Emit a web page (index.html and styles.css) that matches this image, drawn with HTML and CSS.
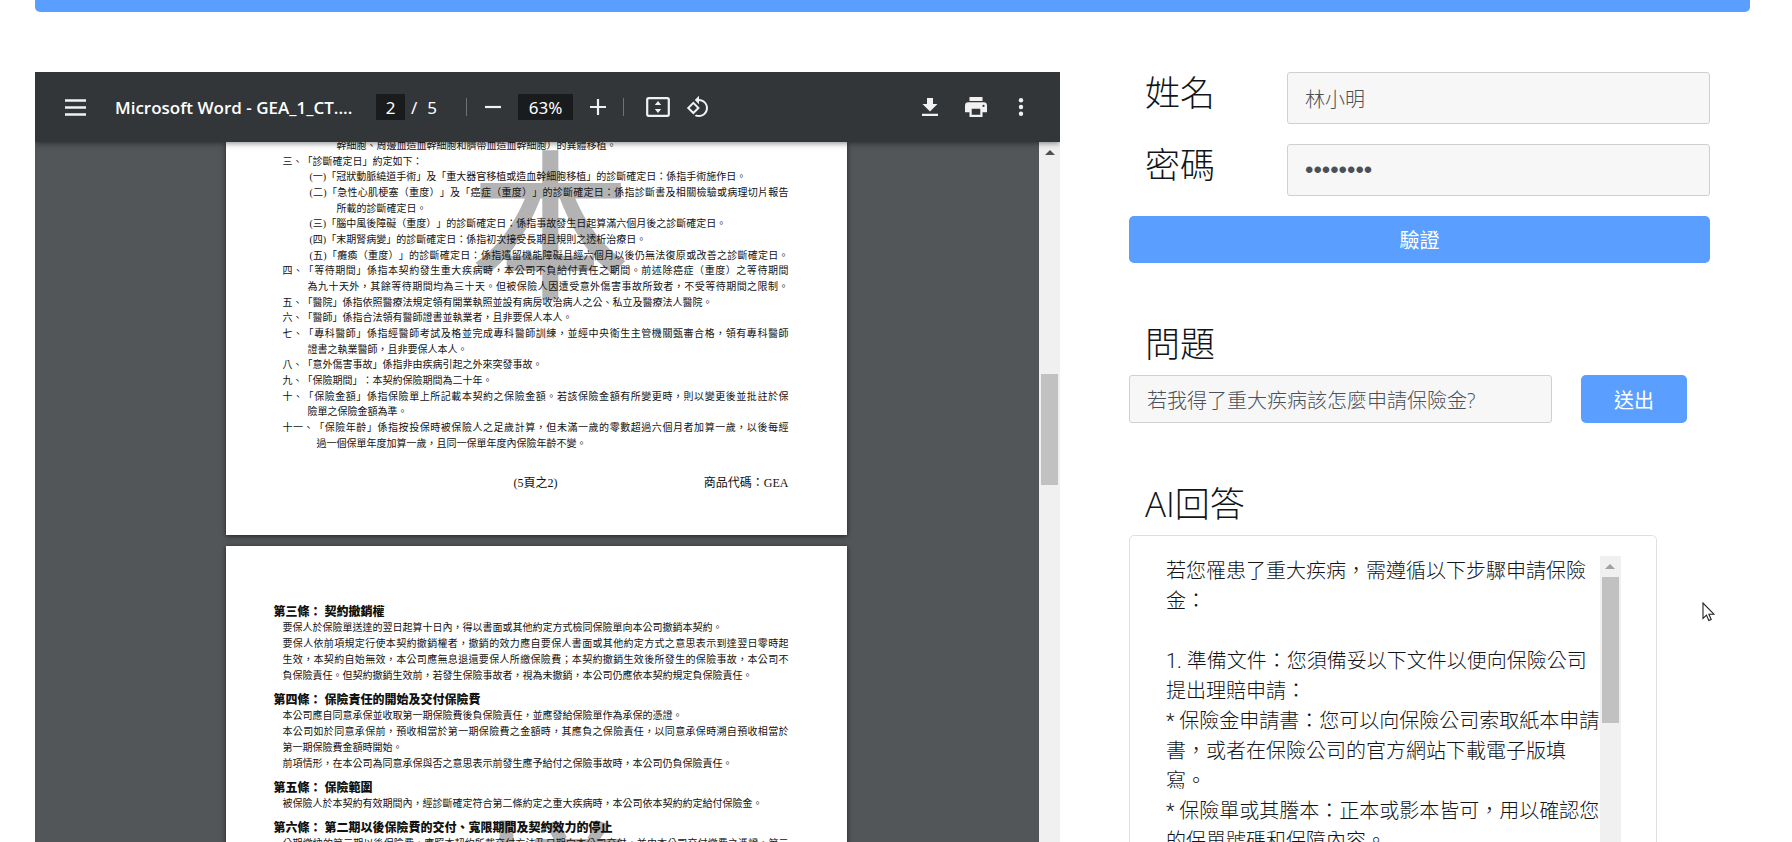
FILE: index.html
```html
<!DOCTYPE html>
<html lang="zh-Hant">
<head>
<meta charset="utf-8">
<title>保險問答</title>
<link rel="stylesheet" href="styles.css">
</head>
<body>
<div class="banner"></div>
<main class="columns">
  <section class="viewer" aria-label="PDF">
    <div class="toolbar">
      <button class="tool tool-menu" aria-label="選單"><svg width="21" height="17" viewBox="0 0 21 17"><path d="M0 1.5h21M0 8.5h21M0 15.500h21" stroke="#f1f1f1" stroke-width="2.600"/></svg></button>
      <span class="doc-title">Microsoft Word - GEA_1_CT....</span>
      <input class="page-no" type="text" value="2" aria-label="頁碼">
      <span class="page-total"><span>/</span><span>5</span></span>
      <span class="divider"></span>
      <button class="tool" aria-label="縮小"><svg width="16" height="16" viewBox="0 0 16 16"><path d="M0 8h16" stroke="#f1f1f1" stroke-width="2.200"/></svg></button>
      <input class="zoom-level" type="text" value="63%" aria-label="縮放">
      <button class="tool" aria-label="放大"><svg width="16" height="16" viewBox="0 0 16 16"><path d="M0 8h16M8 0v16" stroke="#f1f1f1" stroke-width="2.200"/></svg></button>
      <span class="divider"></span>
      <button class="tool tool-fit" aria-label="符合頁面"><svg width="24" height="20" viewBox="0 0 24 20"><rect x="1.200" y="1.200" width="21.600" height="17.600" rx="1.500" fill="none" stroke="#f1f1f1" stroke-width="2.200"/><path d="M12 4l3.200 4H8.800zM12 16l3.200-4H8.800z" fill="#f1f1f1"/></svg></button>
      <button class="tool tool-rotate" aria-label="旋轉"><svg width="24" height="24" viewBox="0 0 24 24"><path fill="#f1f1f1" d="M7.340 6.410L.86 12.900l6.490 6.480 6.490-6.480-6.500-6.490zM3.690 12.900l3.660-3.660L11 12.900l-3.660 3.660-3.650-3.660zm15.670-6.260C17.610 4.880 15.300 4 13 4V.76L8.760 5 13 9.240V6c1.790 0 3.580.68 4.950 2.050 2.730 2.730 2.730 7.170 0 9.900C16.580 19.320 14.790 20 13 20c-.97 0-1.940-.21-2.840-.61l-1.490 1.490C10.020 21.620 11.510 22 13 22c2.300 0 4.610-.88 6.360-2.640 3.520-3.510 3.520-9.210 0-12.720z"/></svg></button>
      <span class="spacer"></span>
      <button class="tool" aria-label="下載"><svg width="16" height="18" viewBox="0 0 16 18"><path fill="#f1f1f1" d="M5 0h6v6h4.500L8 13.500.5 6H5zM0 15.800h16V18H0z"/></svg></button>
      <button class="tool tool-print" aria-label="列印"><svg width="22" height="20" viewBox="0 0 22 20"><path fill="#f1f1f1" fill-rule="evenodd" d="M4.500 0h13v4h-13zM3.500 5.300h15A3.400 3.400 0 0 1 22 8.700v6.600h-4.500V20h-13v-4.700H0V8.700a3.400 3.400 0 0 1 3.500-3.400zM6.700 11.800v6h8.600v-6zM18.500 7.800a1.100 1.100 0 1 0 .01 2.200 1.100 1.100 0 0 0-.01-2.200z"/></svg></button>
      <button class="tool tool-more" aria-label="更多"><svg width="6" height="18" viewBox="0 0 6 18"><g fill="#f1f1f1"><circle cx="3" cy="2.300" r="2.200"/><circle cx="3" cy="9" r="2.200"/><circle cx="3" cy="15.700" r="2.200"/></g></svg></button>
    </div>
    <div class="stage">
      <div class="pages">
        <article class="sheet sheet-two">
          <span class="mark mark-two">本</span>
          <div class="clauses">
            <p class="in-deep">幹細胞、周邊血造血幹細胞和臍帶血造血幹細胞）的異體移植。</p>
            <p>三、「診斷確定日」約定如下：</p>
            <p class="in-item">(一)「冠狀動脈繞道手術」及「重大器官移植或造血幹細胞移植」的診斷確定日：係指手術施作日。</p>
            <p class="in-item full">(二)「急性心肌梗塞（重度）」及「癌症（重度）」的診斷確定日：係指診斷書及相關檢驗或病理切片報告</p>
            <p class="in-deep">所載的診斷確定日。</p>
            <p class="in-item">(三)「腦中風後障礙（重度）」的診斷確定日：係指事故發生日起算滿六個月後之診斷確定日。</p>
            <p class="in-item">(四)「末期腎病變」的診斷確定日：係指初次接受長期且規則之透析治療日。</p>
            <p class="in-item full">(五)「癱瘓（重度）」的診斷確定日：係指遺留機能障礙且經六個月以後仍無法復原或改善之診斷確定日。</p>
            <p class="full">四、「等待期間」係指本契約發生重大疾病時，本公司不負給付責任之期間。前述除癌症（重度）之等待期間</p>
            <p class="in-text full">為九十天外，其餘等待期間均為三十天。但被保險人因遭受意外傷害事故所致者，不受等待期間之限制。</p>
            <p>五、「醫院」係指依照醫療法規定領有開業執照並設有病房收治病人之公、私立及醫療法人醫院。</p>
            <p>六、「醫師」係指合法領有醫師證書並執業者，且非要保人本人。</p>
            <p class="full">七、「專科醫師」係指經醫師考試及格並完成專科醫師訓練，並經中央衛生主管機關甄審合格，領有專科醫師</p>
            <p class="in-text">證書之執業醫師，且非要保人本人。</p>
            <p>八、「意外傷害事故」係指非由疾病引起之外來突發事故。</p>
            <p>九、「保險期間」：本契約保險期間為二十年。</p>
            <p class="full">十、「保險金額」係指保險單上所記載本契約之保險金額。若該保險金額有所變更時，則以變更後並批註於保</p>
            <p class="in-text">險單之保險金額為準。</p>
            <p class="full">十一、「保險年齡」係指按投保時被保險人之足歲計算，但未滿一歲的零數超過六個月者加算一歲，以後每經</p>
            <p class="in-wide">過一個保單年度加算一歲，且同一保單年度內保險年齡不變。</p>
          </div>
          <footer class="sheet-foot"><span></span><span>(5頁之2)</span><span class="code">商品代碼：GEA</span></footer>
        </article>
        <article class="sheet sheet-three">
          <span class="mark mark-three">樣</span>
          <h3>第三條： 契約撤銷權</h3>
          <p>要保人於保險單送達的翌日起算十日內，得以書面或其他約定方式檢同保險單向本公司撤銷本契約。</p>
          <p class="full">要保人依前項規定行使本契約撤銷權者，撤銷的效力應自要保人書面或其他約定方式之意思表示到達翌日零時起</p>
          <p class="full">生效，本契約自始無效，本公司應無息退還要保人所繳保險費；本契約撤銷生效後所發生的保險事故，本公司不</p>
          <p>負保險責任。但契約撤銷生效前，若發生保險事故者，視為未撤銷，本公司仍應依本契約規定負保險責任。</p>
          <h3>第四條： 保險責任的開始及交付保險費</h3>
          <p>本公司應自同意承保並收取第一期保險費後負保險責任，並應發給保險單作為承保的憑證。</p>
          <p class="full">本公司如於同意承保前，預收相當於第一期保險費之金額時，其應負之保險責任，以同意承保時溯自預收相當於</p>
          <p>第一期保險費金額時開始。</p>
          <p>前項情形，在本公司為同意承保與否之意思表示前發生應予給付之保險事故時，本公司仍負保險責任。</p>
          <h3>第五條： 保險範圍</h3>
          <p>被保險人於本契約有效期間內，經診斷確定符合第二條約定之重大疾病時，本公司依本契約約定給付保險金。</p>
          <h3>第六條： 第二期以後保險費的交付、寬限期間及契約效力的停止</h3>
          <p class="full">分期繳納的第二期以後保險費，應照本契約所載交付方法及日期向本公司交付，並由本公司交付繳費之憑證。第二</p>
        </article>
      </div>
      <div class="bar" aria-hidden="true"><span class="bar-arrow"></span><span class="bar-thumb bar-thumb-doc"></span></div>
    </div>
  </section>

  <section class="panel">
    <form class="login">
      <label class="heading" for="name">姓名</label>
      <input class="field" id="name" type="text" value="林小明">
      <label class="heading" for="pass">密碼</label>
      <input class="field secret" id="pass" type="password" value="12345678">
      <button class="primary verify" type="button">驗證</button>
    </form>
    <form class="ask">
      <label class="heading" for="question">問題</label>
      <div class="ask-row">
        <input class="field" id="question" type="text" value="若我得了重大疾病該怎麼申請保險金?">
        <button class="primary send" type="button">送出</button>
      </div>
    </form>
    <h2 class="heading">AI回答</h2>
    <div class="card">
      <div class="answer">若您罹患了重大疾病，需遵循以下步驟申請保險
金：

1. 準備文件：您須備妥以下文件以便向保險公司
提出理賠申請：
* 保險金申請書：您可以向保險公司索取紙本申請
書，或者在保險公司的官方網站下載電子版填
寫。
* 保險單或其謄本：正本或影本皆可，用以確認您
的保單號碼和保障內容。</div>
      <div class="bar" aria-hidden="true"><span class="bar-arrow bar-arrow-dim"></span><span class="bar-thumb bar-thumb-answer"></span></div>
    </div>
  </section>
</main>
<svg class="pointer" width="13" height="20" viewBox="0 0 13 20" aria-hidden="true"><path d="M1 1v15.500l3.500-3.400 2.300 5.400 2.400-1-2.300-5.300h5z" fill="#fff" stroke="#222" stroke-width="1.100"/></svg>
</body>
</html>
```

FILE: styles.css
```css
* { box-sizing: border-box; }
body {
  margin: 0;
  padding: 0 42px 0 35px;
  height: 100vh;
  overflow: hidden;
  display: flex;
  flex-direction: column;
  background: #fff;
  color: #111418;
  font-family: "Open Sans", "Noto Sans CJK TC", sans-serif;
  font-size: 20px;
  font-weight: 300;
}
p, h2, h3 { margin: 0; }
button, input { font: inherit; }
button { border: 0; padding: 0; }

.banner { flex: none; height: 12px; background: #5a9fff; border-radius: 0 0 5px 5px; }
.columns {
  flex: 1;
  min-height: 0;
  margin-top: 60px;
  display: grid;
  grid-template-columns: 1025fr 621fr;
  grid-template-rows: 100%;
  gap: 69px;
}

.viewer { display: flex; flex-direction: column; min-width: 0; overflow: hidden; background: #525659; }
.toolbar {
  flex: none;
  height: 70px;
  padding: 0 36px 0 30px;
  display: flex;
  align-items: center;
  background: #323639;
  color: #fff;
  font-family: "Noto Sans", sans-serif;
  font-size: 17px;
  font-weight: 400;
  box-shadow: 0 1px 6px rgba(0, 0, 0, .5);
  z-index: 1;
}
.tool { display: flex; background: none; }
.tool-menu { margin-right: 29px; }
.doc-title { width: 261px; font-family: "Open Sans", sans-serif; font-weight: 600; white-space: nowrap; }
.page-no, .zoom-level {
  height: 26px;
  border: 0;
  padding: 0;
  background: #191b1c;
  color: #fff;
  text-align: center;
}
.page-no { width: 29px; }
.zoom-level { width: 55px; margin: 0 17px; }
.page-total { width: 61px; padding-left: 6px; display: flex; gap: 10px; }
.divider { width: 1px; height: 18px; margin-right: 18px; background: #6f7274; }
.zoom-level + .tool { margin-right: 17px; }
.tool-fit { margin: 0 16px 0 4px; }
.spacer { flex: 1; }
.tool-print { margin: 0 31px 0 27px; }

.stage { flex: 1; min-height: 0; display: flex; overflow: hidden; }
.pages { flex: 1; display: flex; flex-direction: column; align-items: center; gap: 11px; padding-right: 2px; }
.sheet {
  position: relative;
  flex: none;
  width: 621px;
  background: #fff;
  color: #111;
  box-shadow: 0 1px 5px rgba(0, 0, 0, .6);
  font-family: "Liberation Serif", "Noto Sans CJK TC", serif;
  font-size: 10px;
  font-weight: 400;
  line-height: 16px;
  white-space: nowrap;
  text-spacing-trim: space-all;
  overflow: hidden;
}
.sheet-two {
  height: 393px;
  padding: 0 58px 44px 57px;
  display: flex;
  flex-direction: column;
  justify-content: flex-end;
}
.clauses {
  position: relative;
  flex: none;
  height: 313px;
  display: flex;
  flex-direction: column;
  justify-content: space-between;
}
.clauses p { height: 15px; }
.full { text-align-last: justify; }
.in-item { padding-left: 27px; }
.in-deep { padding-left: 54px; }
.in-text { padding-left: 25px; }
.in-wide { padding-left: 34px; }
.sheet-foot {
  position: relative;
  margin-top: 24px;
  display: grid;
  grid-template-columns: 1fr auto 1fr;
  font-size: 12px;
}
.code { text-align: right; }
.sheet-three { height: 878px; padding: 58px 58px 0 48px; }
.sheet-three h3 { position: relative; font-size: 12px; font-weight: 900; }
.sheet-three p { position: relative; padding-left: 9px; }
.sheet-three p + h3 { margin-top: 8px; }
.mark {
  position: absolute;
  color: #b3b3b3;
  font-size: 160px;
  font-weight: 500;
  line-height: 160px;
}
.mark-two { left: 245px; top: 10px; }
.mark-three { left: 245px; top: 276px; }

.bar {
  flex: none;
  width: 21px;
  display: flex;
  flex-direction: column;
  align-items: center;
  background: #f0f0f0;
}
.bar-arrow {
  margin-top: 8px;
  border: 5px solid transparent;
  border-top: 0;
  border-bottom-color: #505050;
}
.bar-arrow-dim { border-bottom-color: #a0a0a0; }
.bar-thumb { width: 17px; background: #c1c1c1; }
.bar-thumb-doc { height: 111px; margin-top: 219px; }
.bar-thumb-answer { height: 146px; margin-top: 8px; }

.panel { min-width: 0; display: flex; flex-direction: column; }
.heading { padding-left: 16px; font-size: 35px; font-weight: 300; line-height: 42px; }
.login {
  margin-right: 40px;
  display: grid;
  grid-template-columns: 158px 1fr;
  row-gap: 20px;
}
.field {
  width: 100%;
  min-width: 0;
  height: 52px;
  padding: 0 17px;
  border: 1px solid #ced0d2;
  border-radius: 3px;
  background: #f7f7f7;
  color: #495057;
}
.secret { font-family: "Liberation Sans", sans-serif; font-size: 24px; }
.primary {
  height: 47px;
  border-radius: 5px;
  background: #5a9fff;
  color: #fff;
  font-weight: 400;
}
.verify { grid-column: 1 / -1; }
.ask { margin-top: 60px; display: flex; flex-direction: column; }
.ask-row { margin-top: 10px; display: flex; gap: 29px; }
.ask-row .field { flex: 0 1 423px; height: 48px; }
.send { flex: none; width: 106px; height: 48px; }
h2.heading { margin-top: 60px; }
.card {
  flex: none;
  width: 85%;
  height: 400px;
  margin-top: 10px;
  padding: 20px 35px 20px 36px;
  display: flex;
  border: 1px solid #dfdfdf;
  border-radius: 5px;
}
.answer {
  flex: 1;
  min-width: 0;
  font-family: Roboto, "Noto Sans CJK TC", sans-serif;
  line-height: 30px;
  white-space: pre;
}

.pointer { position: absolute; left: 1702px; top: 602px; }
```
